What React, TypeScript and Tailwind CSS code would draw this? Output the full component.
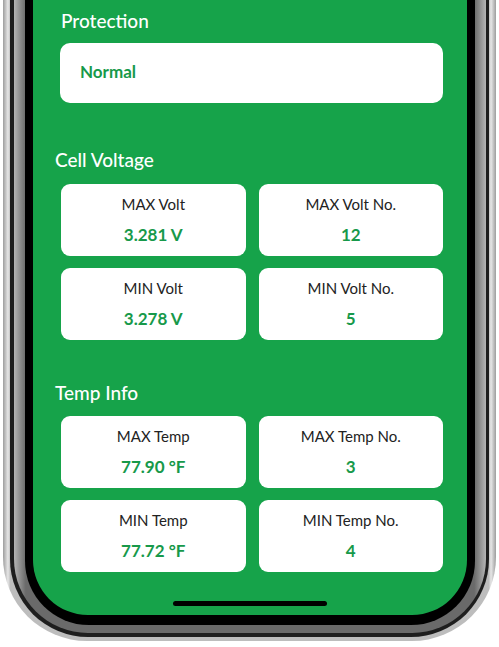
import React from "react";

const voltage = [
  { label: "MAX Volt", value: "3.281 V" },
  { label: "MAX Volt No.", value: "12" },
  { label: "MIN Volt", value: "3.278 V" },
  { label: "MIN Volt No.", value: "5" },
];

const temps = [
  { label: "MAX Temp", value: "77.90 °F" },
  { label: "MAX Temp No.", value: "3" },
  { label: "MIN Temp", value: "77.72 °F" },
  { label: "MIN Temp No.", value: "4" },
];

function StatGrid({ items }: { items: { label: string; value: string }[] }) {
  return (
    <div className="ml-[6px] mr-[2px] grid grid-cols-2 gap-x-[13px] gap-y-[12px]">
      {items.map((it) => (
        <div
          key={it.label}
          className="flex h-[72px] flex-col items-center rounded-[9px] bg-white pt-[10px]"
        >
          <span className="text-[15px] leading-[20px] text-[#222]">{it.label}</span>
          <span className="mt-[10px] text-[17px] font-bold leading-[22px] text-[#17994a]">
            {it.value}
          </span>
        </div>
      ))}
    </div>
  );
}

export default function App() {
  return (
    <div className="h-[647px] w-[499px] overflow-hidden bg-white font-['Lato',sans-serif]">
      <div className="mx-[3px] h-[641px] rounded-b-[84px] bg-[linear-gradient(90deg,#9d9d9d,#e6e6e6_1%,#bdbdbd_1.5%,#bdbdbd_98.5%,#e6e6e6_99%,#9d9d9d)] px-[7px] pb-[4px]">
        <div className="h-full rounded-b-[78px] bg-[#1e1e1e] pl-[4px] pr-[3px] pb-[4px]">
          <div className="h-full rounded-b-[74px] bg-[linear-gradient(90deg,#b5b5b5,#6a6a6a_2.5%,#6a6a6a_97.5%,#b5b5b5)] px-[11px] pb-[8px]">
            <div className="h-full rounded-b-[64px] bg-black px-[8px] pb-[10px]">
              <div className="flex h-full flex-col rounded-b-[55px] bg-[#16a34a] pl-[22px] pr-[22px]">
                <h2 className="ml-[6px] mt-[9px] text-[19px] font-medium leading-[24px] text-white">
                  Protection
                </h2>
                <div className="ml-[5px] mr-[2px] mt-[10px] flex h-[60px] items-center rounded-[10px] bg-white px-[20px] pb-[3px]">
                  <span className="text-[17px] font-bold text-[#17994a]">Normal</span>
                </div>

                <h2 className="mt-[45px] text-[19px] font-medium leading-[24px] text-white">
                  Cell Voltage
                </h2>
                <div className="mt-[12px]">
                  <StatGrid items={voltage} />
                </div>

                <h2 className="mt-[41px] text-[19px] font-medium leading-[24px] text-white">
                  Temp Info
                </h2>
                <div className="mt-[11px]">
                  <StatGrid items={temps} />
                </div>

                <div className="mx-auto mb-[9px] mt-auto h-[5px] w-[154px] rounded-full bg-black" />
              </div>
            </div>
          </div>
        </div>
      </div>
    </div>
  );
}
